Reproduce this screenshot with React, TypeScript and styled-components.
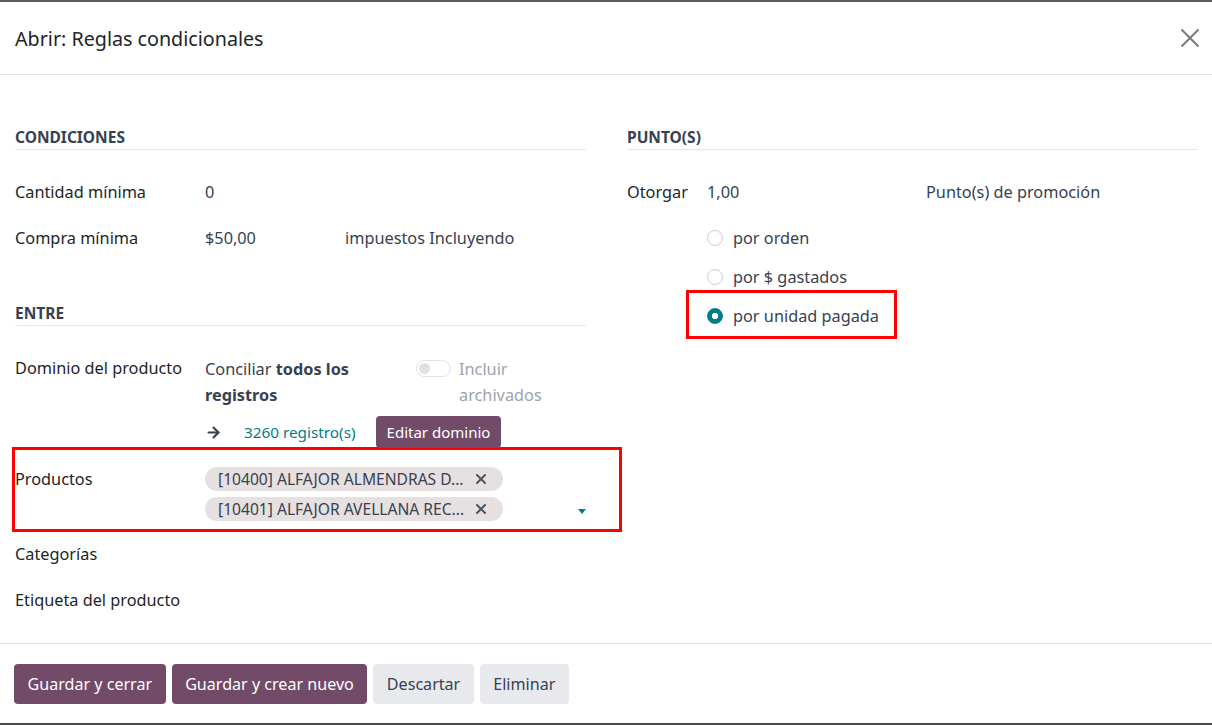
import styled, { createGlobalStyle } from 'styled-components'
import { ArrowRight, X } from 'lucide-react'

const GlobalStyle = createGlobalStyle`
  html, body {
    margin: 0;
    padding: 0;
    background: #ffffff;
  }
  body {
    font-family: "Noto Sans", "Open Sans", sans-serif;
    color: #212529;
  }
  * {
    box-sizing: border-box;
  }
`

type RadioType = {
  checked?: boolean
}

const radios = [
  { label: 'por orden', checked: false },
  { label: 'por $ gastados', checked: false },
]

const App = () => {
  return (
    <>
      <GlobalStyle />
      <Dialog>
        <Header>
          <Title>Abrir: Reglas condicionales</Title>
          <CloseButton type="button" aria-label="Cerrar">
            <svg width="20" height="20" viewBox="0 0 20 20">
              <path d="M1.5 1.5 L18.5 18.5 M18.5 1.5 L1.5 18.5" stroke="#7a7a7a" strokeWidth="2" fill="none" />
            </svg>
          </CloseButton>
        </Header>

        <Body>
          <Column>
            <Section>
              <SectionTitle>Condiciones</SectionTitle>
              <Row>
                <Label>Cantidad mínima</Label>
                <Value>0</Value>
              </Row>
              <Row>
                <Label>Compra mínima</Label>
                <Value>
                  <Amount>$50,00</Amount>
                  impuestos Incluyendo
                </Value>
              </Row>
            </Section>

            <Section>
              <SectionTitle>Entre</SectionTitle>
              <DomainRow>
                <Label>Dominio del producto</Label>
                <div>
                  <DomainTop>
                    <DomainText>
                      Conciliar <strong>todos los registros</strong>
                    </DomainText>
                    <Toggle />
                    <ArchiveText>Incluir archivados</ArchiveText>
                  </DomainTop>
                  <DomainActions>
                    <ArrowRight size={17} strokeWidth={3} color="#374151" />
                    <RecordLink>3260 registro(s)</RecordLink>
                    <SmallButton type="button">Editar dominio</SmallButton>
                  </DomainActions>
                </div>
              </DomainRow>

              <ProductsHighlight>
                <Row $flush>
                  <Label>Productos</Label>
                  <ManyField>
                    <Tags>
                      <Tag>
                        <span>[10400] ALFAJOR ALMENDRAS D...</span>
                        <X size={16} strokeWidth={3} color="#4b5563" />
                      </Tag>
                      <Tag>
                        <span>[10401] ALFAJOR AVELLANA REC...</span>
                        <X size={16} strokeWidth={3} color="#4b5563" />
                      </Tag>
                    </Tags>
                    <Caret />
                  </ManyField>
                </Row>
              </ProductsHighlight>

              <Row $top={10}>
                <Label>Categorías</Label>
                <Value />
              </Row>
              <Row>
                <Label>Etiqueta del producto</Label>
                <Value />
              </Row>
            </Section>
          </Column>

          <Column>
            <Section>
              <SectionTitle>Punto(s)</SectionTitle>
              <PointsRow>
                <Label>Otorgar</Label>
                <Value>1,00</Value>
                <Value>Punto(s) de promoción</Value>
              </PointsRow>
              <RadioList>
                {radios.map((r) => (
                  <RadioOption key={r.label}>
                    <Radio checked={r.checked} />
                    {r.label}
                  </RadioOption>
                ))}
                <RadioHighlight>
                  <RadioOption>
                    <Radio checked />
                    por unidad pagada
                  </RadioOption>
                </RadioHighlight>
              </RadioList>
            </Section>
          </Column>
        </Body>

        <Footer>
          <Button type="button" $primary>
            Guardar y cerrar
          </Button>
          <Button type="button" $primary>
            Guardar y crear nuevo
          </Button>
          <Button type="button">Descartar</Button>
          <Button type="button">Eliminar</Button>
        </Footer>
      </Dialog>
    </>
  )
}

const Dialog = styled.div`
  width: 1212px;
  height: 725px;
  border-top: 2px solid #5c5c5c;
  border-bottom: 2px solid #4a4a4a;
  display: flex;
  flex-direction: column;
  background: #fff;
`

const Header = styled.header`
  height: 73px;
  flex-shrink: 0;
  display: flex;
  align-items: center;
  justify-content: space-between;
  padding: 0 12px 0 15px;
  border-bottom: 1px solid #dee2e6;
`

const Title = styled.h4`
  margin: 0;
  font-size: 19.7px;
  font-weight: 400;
  color: #212529;
`

const CloseButton = styled.button`
  border: none;
  background: none;
  padding: 0;
  width: 20px;
  height: 20px;
  display: flex;
  cursor: pointer;
`

const Body = styled.main`
  flex: 1;
  display: grid;
  grid-template-columns: 1fr 1fr;
  column-gap: 41px;
  padding: 0 14px 0 15px;
`

const Column = styled.div`
  padding-top: 52px;
`

const Section = styled.section`
  & + & {
    padding-top: 31px;
  }
`

const SectionTitle = styled.div`
  font-size: 15.5px;
  line-height: 20px;
  font-weight: 700;
  text-transform: uppercase;
  color: #374151;
  padding-bottom: 2px;
  border-bottom: 1px solid #e3e5e8;
  margin-bottom: 30px;
`

const Row = styled.div<{ $flush?: boolean; $top?: number }>`
  display: grid;
  grid-template-columns: 190px 1fr;
  font-size: 16.3px;
  line-height: 24px;
  margin-top: ${({ $top }) => ($top ? `${$top}px` : '0')};
  margin-bottom: ${({ $flush }) => ($flush ? '0' : '22px')};
`

const Label = styled.div`
  color: #212529;
`

const Value = styled.div`
  color: #374151;
  display: flex;
`

const Amount = styled.span`
  width: 140px;
`

const DomainRow = styled(Row)`
  margin-bottom: 0;
`

const DomainTop = styled.div`
  display: flex;
  align-items: flex-start;
  line-height: 26px;
`

const DomainText = styled.div`
  width: 200px;
  margin-right: 11px;
  color: #374151;

  strong {
    font-weight: 700;
  }
`

const Toggle = styled.span`
  position: relative;
  width: 35px;
  height: 17px;
  margin-top: 4px;
  margin-right: 8px;
  border: 1px solid #dee2e6;
  border-radius: 9px;
  background: #fff;
  flex-shrink: 0;

  &::after {
    content: '';
    position: absolute;
    left: 2px;
    top: 2px;
    width: 11px;
    height: 11px;
    border-radius: 50%;
    background: #dee2e6;
  }
`

const ArchiveText = styled.div`
  width: 100px;
  color: #9ca3af;
`

const DomainActions = styled.div`
  display: flex;
  align-items: center;
  margin-top: 8px;
  height: 32px;
`

const RecordLink = styled.a`
  color: #017e84;
  margin-left: 22px;
  margin-right: 20px;
  font-size: 15.3px;
  cursor: pointer;
`

const SmallButton = styled.button`
  height: 32px;
  padding: 0 11px;
  border: none;
  border-radius: 4px;
  background: #714b67;
  color: #fff;
  font-family: inherit;
  font-size: 15px;
`

const ProductsHighlight = styled.div`
  border: 3px solid #ff0000;
  margin: -1px -36px 0 -3px;
  padding: 17px 33px 8px 0;
`

const ManyField = styled.div`
  display: flex;
  justify-content: space-between;
  align-items: flex-end;
`

const Tags = styled.div`
  display: flex;
  flex-direction: column;
  align-items: flex-start;
  gap: 6px;
`

const Tag = styled.span`
  display: inline-flex;
  align-items: center;
  gap: 8px;
  width: 298px;
  height: 24px;
  padding: 0 14px 0 13px;
  border-radius: 12px;
  background: #e6e0e0;
  color: #374151;
  font-size: 15.6px;
  white-space: nowrap;

  span {
    flex: 1;
  }
`

const Caret = styled.span`
  width: 0;
  height: 0;
  border-left: 4.5px solid transparent;
  border-right: 4.5px solid transparent;
  border-top: 5px solid #017e84;
  margin-bottom: 7px;
  margin-right: 0;
`

const PointsRow = styled(Row)`
  grid-template-columns: 80px 219px 1fr;
`

const RadioList = styled.div`
  display: flex;
  flex-direction: column;
  align-items: flex-start;
  gap: 15px;
  padding-left: 80px;
`

const RadioOption = styled.label`
  display: flex;
  align-items: center;
  gap: 10px;
  font-size: 16.3px;
  line-height: 24px;
  color: #374151;
`

const Radio = styled.span<RadioType>`
  width: 16px;
  height: 16px;
  border-radius: 50%;
  border: 1px solid ${({ checked }) => (checked ? '#017e84' : '#c9cdd3')};
  background: ${({ checked }) =>
    checked ? 'radial-gradient(circle, #fff 0 3px, #017e84 3.5px)' : '#fff'};
`

const RadioHighlight = styled.div`
  border: 3px solid #ff0000;
  margin: -14px 0 0 -21px;
  padding: 11px 15px 8px 18px;
`

const Footer = styled.footer`
  flex-shrink: 0;
  display: flex;
  gap: 6px;
  padding: 20px 14px 19px;
  border-top: 1px solid #dee2e6;
`

const Button = styled.button<{ $primary?: boolean }>`
  height: 40px;
  padding: 0 13.5px;
  border: none;
  border-radius: 4px;
  font-family: inherit;
  font-size: 16.1px;
  background: ${({ $primary }) => ($primary ? '#714b67' : '#e7e9ed')};
  color: ${({ $primary }) => ($primary ? '#ffffff' : '#374151')};
  cursor: pointer;
`

export default App
